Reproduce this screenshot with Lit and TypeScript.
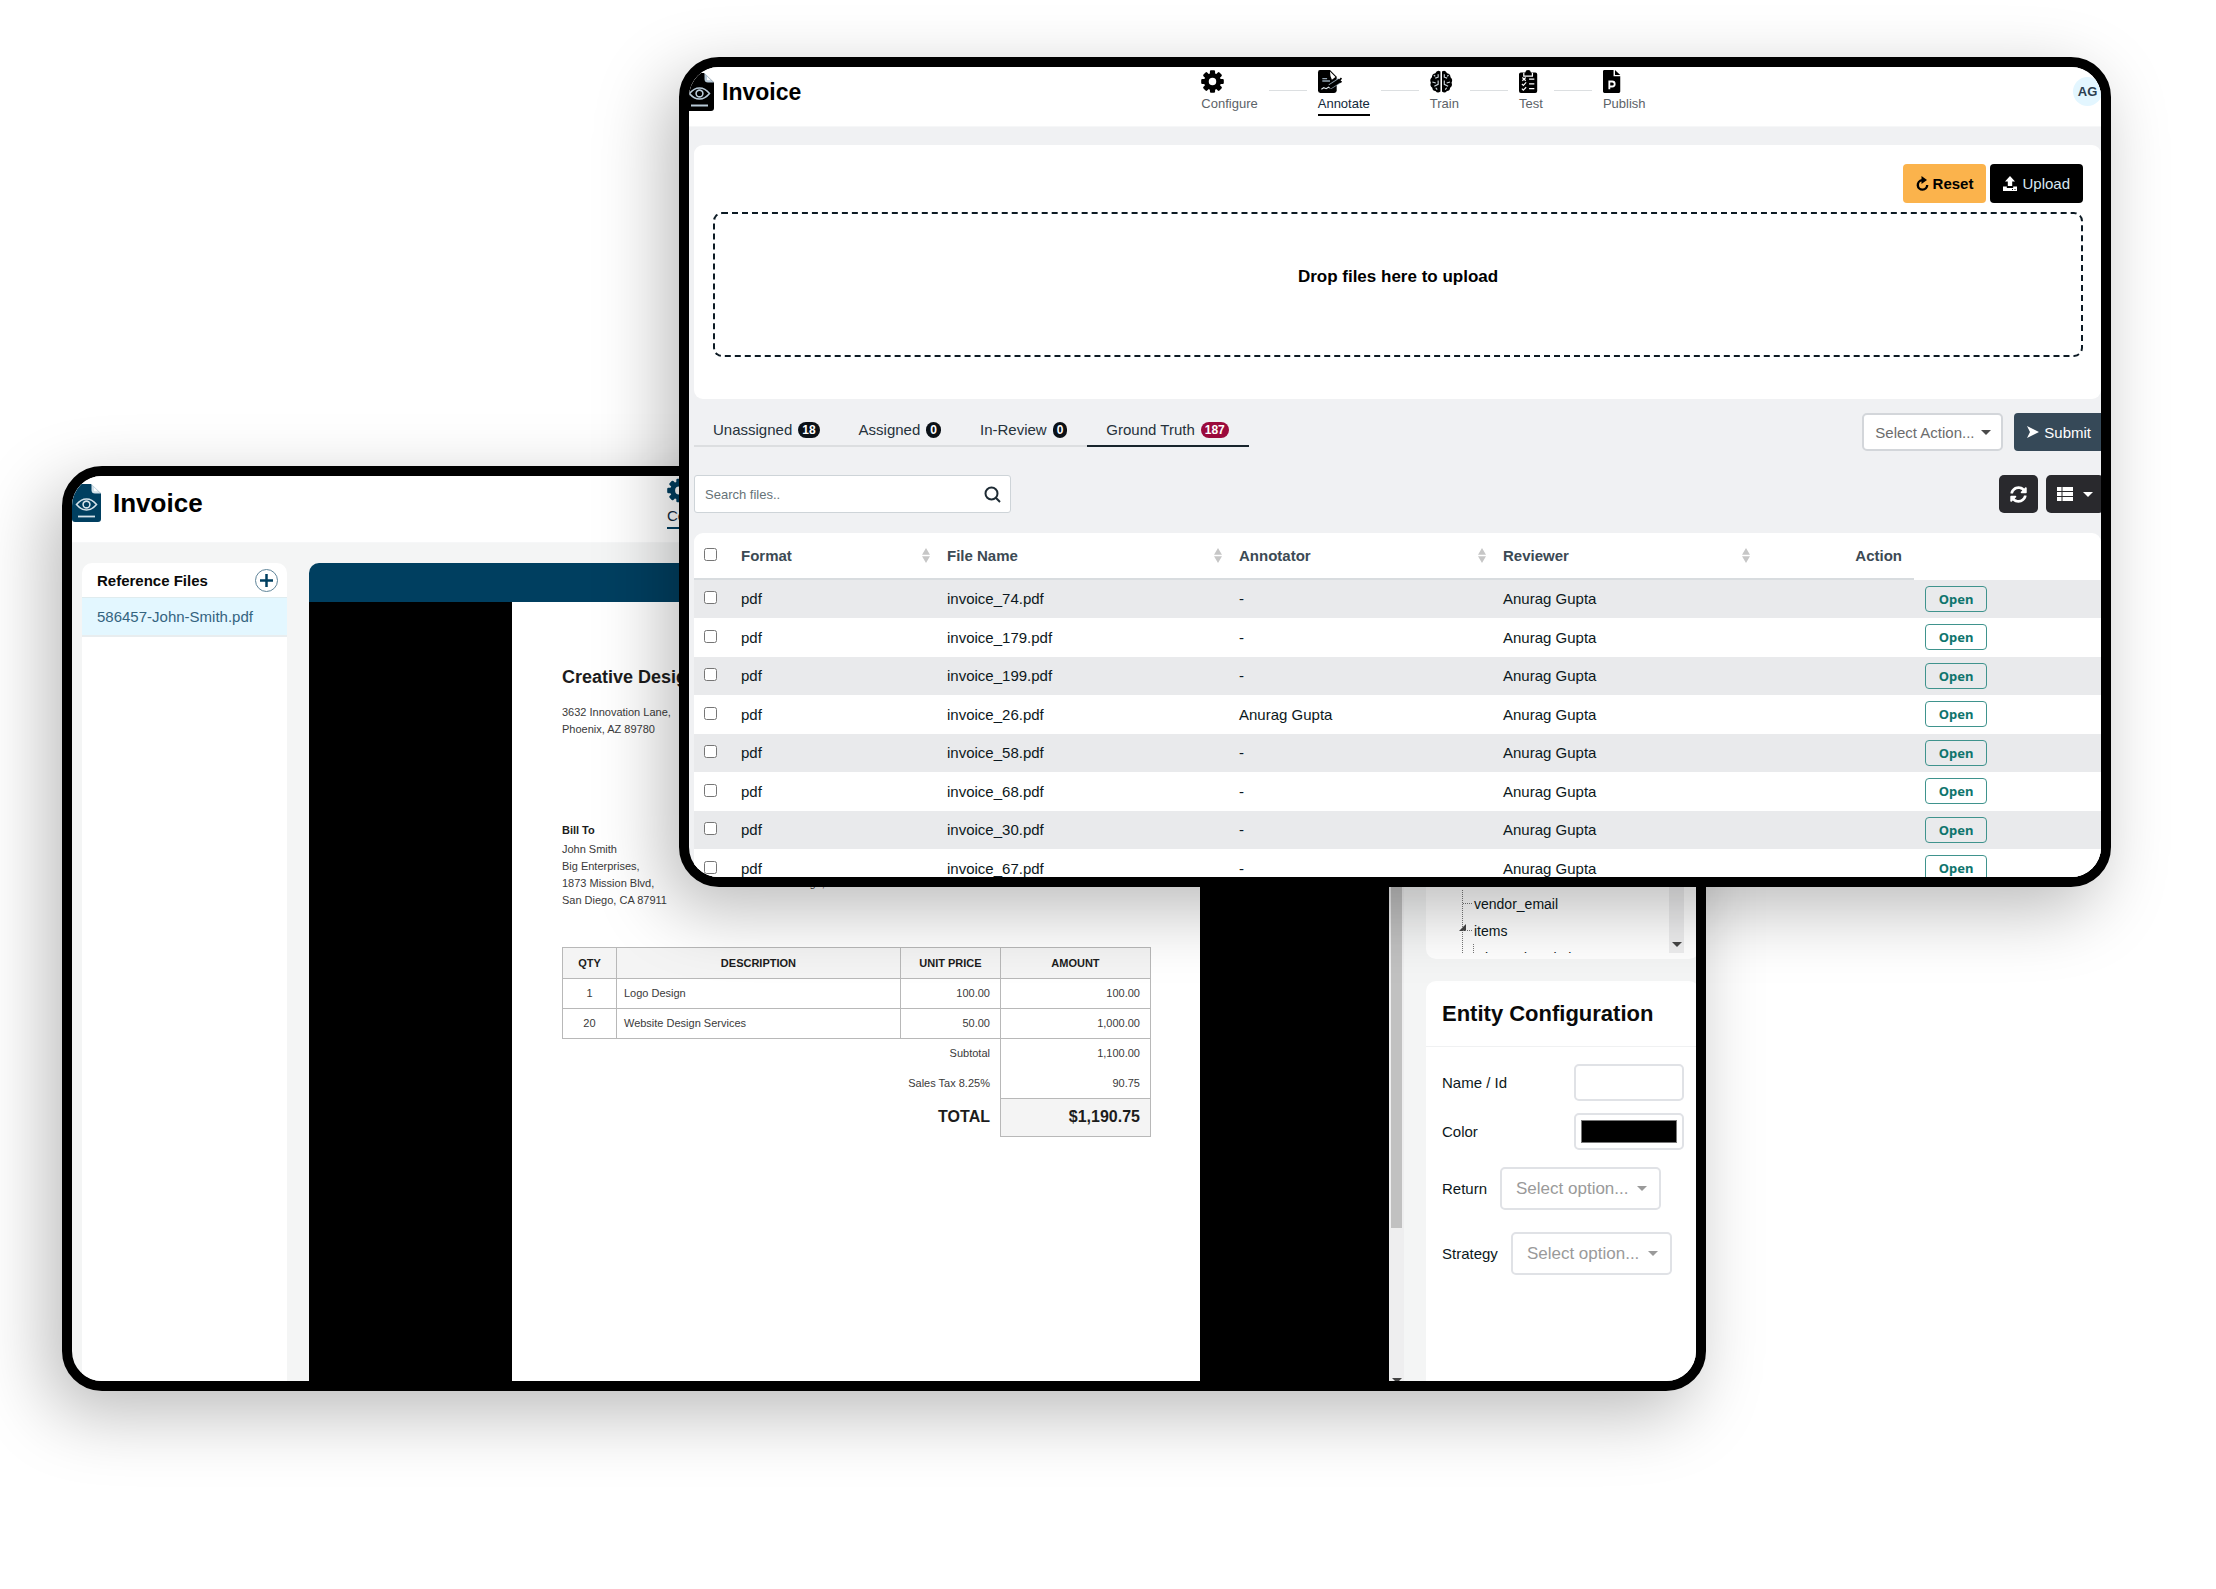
import { LitElement, html, svg, css } from "lit";
import { customElement, property } from "lit/decorators.js";
import { classMap } from "lit/directives/class-map.js";

const controls = css`
  :host {
    font-family: "Liberation Sans", Arial, Helvetica, sans-serif;
    font-size: 15px;
    color: #0c1820;
  }
  * {
    box-sizing: border-box;
  }
  svg {
    display: block;
    flex: none;
  }
  button,
  input,
  select {
    font: inherit;
    margin: 0;
  }
  button {
    cursor: pointer;
  }
  .picker {
    display: inline-grid;
    align-items: center;
  }
  .picker select {
    grid-area: 1 / 1;
    width: 100%;
    height: 100%;
    appearance: none;
    background: #fff;
    border: 2px solid #e0e2e6;
    border-radius: 5px;
    color: inherit;
  }
  .picker svg {
    grid-area: 1 / 1;
    justify-self: end;
    pointer-events: none;
  }
`;

const caret = html`<svg width="10" height="5" viewBox="0 0 10 5" fill="currentColor" aria-hidden="true">
  <path d="M0 0h10L5 5z" />
</svg>`;

const stepIcons: Record<string, unknown> = {
  Configure: svg`
    <circle cx="12" cy="12" r="6.4" fill="none" stroke="currentColor" stroke-width="5" />
    <path d="M9.3 4.5V1.4q0-1.2 1.2-1.2h3q1.2 0 1.2 1.2v3.1zM9.3 19.5v3.1q0 1.2 1.2 1.2h3q1.2 0 1.2-1.2v-3.1z" />
    <path d="M4.5 9.3H1.4q-1.2 0-1.2 1.2v3q0 1.2 1.2 1.2h3.1zM19.5 9.3h3.1q1.2 0 1.2 1.2v3q0 1.2-1.2 1.2h-3.1z" />
    <g transform="rotate(45 12 12)">
      <path d="M9.3 4.5V1.4q0-1.2 1.2-1.2h3q1.2 0 1.2 1.2v3.1zM9.3 19.5v3.1q0 1.2 1.2 1.2h3q1.2 0 1.2-1.2v-3.1z" />
      <path d="M4.5 9.3H1.4q-1.2 0-1.2 1.2v3q0 1.2 1.2 1.2h3.1zM19.5 9.3h3.1q1.2 0 1.2 1.2v3q0 1.2-1.2 1.2h-3.1z" />
    </g>`,
  Annotate: svg`
    <path d="M2 0h10.500l7 7v14.500q0 2.500-2.500 2.500H2.500Q0 24 0 21.500V2.500Q0 0 2 0z" />
    <path d="M12.500 1.500l5.700 5.800-3.700 3q-2-3.500-2-8.800z" fill="#fff" />
    <path d="M4.500 9h5M4.500 11.500h8" stroke="#93a5b3" stroke-width="1.500" />
    <path d="M3.500 20l2.500-1.500 2.500 1 2.500-1.500 2 1 2.500-1.500" fill="none" stroke="#dfe7ec" stroke-width="1.200" />
    <path d="M12.500 17.500L22.500 11" stroke="#8fa2b0" stroke-width="5.600" />
    <path d="M12 17.800L23 10.800" stroke="currentColor" stroke-width="4" />
    <path d="M22.500 10.500l2-2M22.500 11l2 2" stroke="currentColor" stroke-width="1.800" />`,
  Train: svg`
    <path d="M10.900 1.500v21q-3 2.300-5.200-.6-3 0-3.300-3.400Q-.5 16.500.9 13.300-.8 9.800 2 7.600 2 4 5.600 3.500q1.700-4.300 5.300-2z" />
    <path d="M12.500 1.500v21q3 2.300 5.200-.6 3 0 3.300-3.400 2.900-2 1.500-5.200 1.700-3.500-1.100-5.700 0-3.600-3.600-4.100-1.700-4.300-5.300-2z" />
    <path d="M8.500 4.500v3l-3 1M2.500 12.500l3.500 1M8.500 11v4l-4 2M7.500 20.500l-1.500-2M4 5.500l1.500 1M14.900 4.500v3l3 1M20.900 12.500l-3.500 1M14.900 11v4l4 2M15.900 20.500l1.500-2M19.400 5.500l-1.500 1" fill="none" stroke="#cfd8de" stroke-width="1.200" />`,
  Test: svg`
    <path d="M2 2.500h4.500Q7 0 9.500 0T12.500 2.500H17q2 0 2 2V22q0 2-2 2H2q-2 0-2-2V4.500q0-2 2-2z" />
    <path d="M5 2.800v3.700h9V2.800M10.500 9.500H16M10.500 14.500H16M10.500 19.500H16" fill="none" stroke="#fff" stroke-width="1.300" />
    <path d="M3.500 7.800l3.500 3.400M7 7.800l-3.500 3.400M3 14.500l1.500 1.500 3-3M3 19.500L4.500 21l3-3" fill="none" stroke="#fff" stroke-width="1.200" />`,
  Publish: svg`
    <path d="M1.500 0H11v6.500h7V22.500q0 1.500-1.500 1.500h-15Q0 24 0 22.500v-21Q0 0 1.500 0z" />
    <path d="M12.500 0L18 5.200h-5.500z" />
    <path d="M6.600 20v-8h3q2.600 0 2.600 2.600T9.600 17.200h-3" fill="none" stroke="#fff" stroke-width="1.900" />`,
};

const stepNames = ["Configure", "Annotate", "Train", "Test", "Publish"];

@customElement("app-bar")
export class AppBar extends LitElement {
  @property() current = "Configure";
  @property() initials = "";

  static styles = [
    controls,
    css`
      :host {
        display: block;
        --ink: #000;
        --fold: #b8cad8;
      }
      .bar {
        display: grid;
        grid-template-columns: 512fr 871fr 28px;
        min-height: 60px;
        padding-bottom: 10px;
        background: #fff;
        border-bottom: 1px solid #f6f7f8;
      }
      .brand {
        display: flex;
        align-items: center;
        gap: 8px;
        margin-left: -4px;
        color: var(--ink);
      }
      .title {
        margin: 0;
        font-size: 23px;
        line-height: 28px;
        color: #000;
      }
      .steps {
        display: flex;
        align-items: flex-end;
        gap: 11px;
        color: var(--ink);
      }
      .step {
        display: flex;
        flex-direction: column;
        gap: 1px;
        color: inherit;
        text-decoration: none;
        border-bottom: 2px solid transparent;
      }
      .step svg {
        height: 23px;
        overflow: visible;
      }
      .label {
        font-size: 13px;
        line-height: 20px;
        color: #5c6268;
      }
      .active {
        border-color: var(--ink);
      }
      .active .label {
        color: #12293b;
      }
      .link {
        width: 38px;
        height: 1px;
        margin-bottom: 25px;
        background: #dcdfe1;
      }
      .avatar {
        align-self: center;
        width: 29px;
        height: 29px;
        border-radius: 50%;
        background: #e3f6ff;
        color: #2c3e50;
        font-size: 13px;
        font-weight: bold;
        line-height: 29px;
        text-align: center;
      }
      :host([large]) {
        --ink: #003f60;
        --fold: #d4e2ea;
      }
      :host([large]) .bar {
        grid-template-columns: 595fr 1000fr 29px;
        min-height: 67px;
        padding-bottom: 13px;
      }
      :host([large]) .brand {
        gap: 12px;
        margin-left: 0;
      }
      :host([large]) .title {
        font-size: 26px;
      }
      :host([large]) .step svg {
        height: 27px;
      }
      :host([large]) .label {
        font-size: 15px;
        line-height: 22px;
      }
    `,
  ];

  render() {
    return html`
      <header class="bar">
        <div class="brand">
          <svg width="29" height="38" viewBox="0 0 29 38" aria-hidden="true">
            <path d="M3 0h16l10 9.500V35q0 3-3 3H3q-3 0-3-3V3q0-3 3-3z" fill="currentColor" />
            <path d="M19.500 0v6q0 3.500 3.500 3.500h6L19.500 0z" fill="var(--fold)" />
            <path d="M22 3.500v3q0 .8.800.8h3z" fill="#fff" />
            <path d="M4.500 20.500Q9 15 14.500 15t10 5.500Q20 26 14.500 26t-10-5.500z" fill="none" stroke="var(--fold)" stroke-width="1.600" />
            <circle cx="14.500" cy="20.500" r="3.400" fill="none" stroke="var(--fold)" stroke-width="1.600" />
            <path d="M6 32.500h17" stroke="var(--fold)" stroke-width="1.800" />
          </svg>
          <h1 class="title">Invoice</h1>
        </div>
        <nav class="steps" aria-label="Steps">
          ${stepNames.map(
            (name, i) => html`
              ${i ? html`<span class="link"></span>` : ""}
              <a class=${classMap({ step: true, active: name === this.current })} href="#">
                <svg width="24" viewBox="0 0 24 24" preserveAspectRatio="xMinYMid" fill="currentColor" aria-hidden="true">
                  ${stepIcons[name]}
                </svg>
                <span class="label">${name}</span>
              </a>
            `
          )}
        </nav>
        ${this.initials ? html`<span class="avatar">${this.initials}</span>` : ""}
      </header>
    `;
  }
}

interface FileRow {
  name: string;
  annotator: string;
}

const files: FileRow[] = [
  { name: "invoice_74.pdf", annotator: "-" },
  { name: "invoice_179.pdf", annotator: "-" },
  { name: "invoice_199.pdf", annotator: "-" },
  { name: "invoice_26.pdf", annotator: "Anurag Gupta" },
  { name: "invoice_58.pdf", annotator: "-" },
  { name: "invoice_68.pdf", annotator: "-" },
  { name: "invoice_30.pdf", annotator: "-" },
  { name: "invoice_67.pdf", annotator: "-" },
];

const tabs = [
  { label: "Unassigned", count: 18 },
  { label: "Assigned", count: 0 },
  { label: "In-Review", count: 0 },
  { label: "Ground Truth", count: 187, active: true },
];

@customElement("annotate-screen")
export class AnnotateScreen extends LitElement {
  static styles = [
    controls,
    css`
      :host {
        display: block;
      }
      .body {
        padding: 18px 0 0 5px;
      }
      .panel {
        padding: 19px 18px 42px 19px;
        background: #fff;
        border-radius: 9px;
      }
      .buttons {
        display: flex;
        justify-content: flex-end;
        gap: 4px;
      }
      .btn {
        display: flex;
        align-items: center;
        gap: 5px;
        height: 39px;
        padding: 0 13px;
        border: 0;
        border-radius: 4px;
        color: #fff;
        white-space: nowrap;
      }
      .reset {
        gap: 4px;
        background: #fbb34c;
        color: #000;
        font-weight: bold;
      }
      .upload {
        background: #000;
        color: #d8e8f2;
      }
      .drop {
        display: flex;
        align-items: center;
        justify-content: center;
        height: 145px;
        margin-top: 9px;
        padding-bottom: 15px;
        border: 2px dashed #0c1a24;
        border-radius: 9px;
        font-size: 17px;
        font-weight: bold;
        color: #000;
      }
      .row {
        display: flex;
        align-items: flex-end;
        justify-content: space-between;
        margin-right: -3px;
      }
      .filters {
        margin-top: 14px;
      }
      .finder {
        margin-top: 24px;
      }
      .tabs {
        display: flex;
        margin-bottom: 4px;
      }
      .tab {
        display: flex;
        align-items: center;
        gap: 6px;
        padding: 0 20px 6px 19px;
        border: 0;
        border-bottom: 2px solid #dcdee0;
        background: none;
        color: #26323b;
        line-height: 18px;
      }
      .current {
        border-color: #18242c;
      }
      .badge {
        padding: 0 4px;
        border-radius: 8px;
        background: #0b1117;
        color: #fff;
        font-size: 12px;
        font-weight: bold;
        line-height: 16px;
      }
      .current .badge {
        background: #9b0a3c;
      }
      .group {
        display: flex;
        gap: 11px;
      }
      .action {
        width: 141px;
        height: 38px;
        color: #6c6c6c;
      }
      .action select {
        padding: 0 11px;
        border-color: #d3d6da;
      }
      .action svg {
        margin-right: 12px;
        color: #4a4a4a;
      }
      .submit {
        gap: 5px;
        height: 38px;
        background: #364958;
      }
      .icon {
        justify-content: center;
        gap: 10px;
        height: 38px;
        padding: 0 11px;
        border-radius: 5px;
        background: #29292d;
      }
      .tools {
        gap: 8px;
      }
      .search {
        display: flex;
        align-items: center;
        width: 317px;
        height: 38px;
        padding: 0 9px 0 10px;
        background: #fff;
        border: 1px solid #ced4d8;
        border-radius: 3px;
      }
      .search input {
        flex: 1;
        min-width: 0;
        padding: 0;
        border: 0;
        outline: 0;
        font-size: 13px;
      }
      .search input::placeholder {
        color: #667378;
      }
      .sheet {
        margin-top: 20px;
        background: #fff;
        border-radius: 9px 9px 0 0;
        overflow: hidden;
      }
      .files {
        width: 100%;
        table-layout: fixed;
        border-spacing: 0;
      }
      .c-check {
        width: 37px;
      }
      .c-format {
        width: 206px;
      }
      .c-name {
        width: 292px;
      }
      .c-person {
        width: 264px;
      }
      .c-action {
        width: 157px;
      }
      .c-open {
        width: 187px;
      }
      .files th,
      .files td {
        padding: 0 10px 1px;
        text-align: left;
        vertical-align: middle;
      }
      .files th {
        height: 47px;
        color: #3c4a54;
        border-bottom: 2px solid #d8dcdf;
      }
      .files th.bare {
        border: 0;
      }
      .files th.act {
        padding-right: 12px;
        text-align: right;
      }
      .files td {
        height: 38px;
        background: #e9eaec;
      }
      .files tr:nth-child(even) td {
        height: 39px;
        background: #fff;
      }
      .sortable {
        display: flex;
        align-items: center;
        justify-content: space-between;
        margin-right: -3px;
      }
      .check {
        display: block;
        width: 13px;
        height: 13px;
        margin-bottom: 2px;
      }
      .open {
        display: block;
        width: 62px;
        height: 26px;
        margin-left: 1px;
        padding: 0;
        background: none;
        border: 1px solid #3f938d;
        border-radius: 4px;
        color: #0f756d;
        font: bold 13px "Noto Sans", sans-serif;
      }
    `,
  ];

  private head(label: string) {
    return html`<th scope="col">
      <span class="sortable">
        ${label}
        <svg width="8" height="15" viewBox="0 0 8 15" fill="#c6c6c6" aria-hidden="true">
          <path d="M0 6.800L4 0l4 6.800zM0 8.200L4 15l4-6.800z" />
        </svg>
      </span>
    </th>`;
  }

  render() {
    return html`
      <app-bar current="Annotate" initials="AG"></app-bar>
      <main class="body">
        <section class="panel">
          <div class="buttons">
            <button class="btn reset">
              <svg width="13" height="15" viewBox="0 0 13 15" aria-hidden="true">
                <path d="M6 4.300A4.700 4.700 0 1 0 11.200 9" fill="none" stroke="currentColor" stroke-width="2.400" />
                <path d="M5.500 0l5.500 4-5.500 4z" />
              </svg>
              Reset
            </button>
            <button class="btn upload">
              <svg width="14" height="15" viewBox="0 0 14 15" fill="#fff" aria-hidden="true">
                <path d="M7 0l5 5.500H9.200V10H4.800V5.500H2z" />
                <path d="M0 10.500h3.800V12h6.400v-1.500H14V15H0z" />
                <path d="M9 13.500h1M11.500 13.500h1" stroke="#000" />
              </svg>
              Upload
            </button>
          </div>
          <div class="drop">Drop files here to upload</div>
        </section>

        <div class="row filters">
          <div class="tabs" role="tablist">
            ${tabs.map(
              (t) => html`<button role="tab" class=${classMap({ tab: true, current: !!t.active })}>
                ${t.label}<span class="badge">${t.count}</span>
              </button>`
            )}
          </div>
          <div class="group">
            <label class="picker action">
              <select aria-label="Action">
                <option>Select Action...</option>
              </select>
              ${caret}
            </label>
            <button class="btn submit">
              <svg width="12" height="12" viewBox="0 0 12 12" fill="currentColor" aria-hidden="true">
                <path d="M0 0l12 6L0 12l3-6z" />
              </svg>
              Submit
            </button>
          </div>
        </div>

        <div class="row finder">
          <label class="search">
            <input type="text" placeholder="Search files.." aria-label="Search files" />
            <svg width="17" height="17" viewBox="0 0 17 17" fill="none" stroke="#1d2a33" stroke-width="2" aria-hidden="true">
              <circle cx="7.500" cy="7.500" r="6" />
              <path d="M11.800 11.800L16 16" />
            </svg>
          </label>
          <div class="group tools">
            <button class="btn icon" aria-label="Refresh">
              <svg width="17" height="17" viewBox="0 0 512 512" fill="currentColor" aria-hidden="true">
                <path d="M370.720 133.280C339.458 104.008 298.888 87.962 255.848 88c-77.458.068-144.328 53.178-162.791 126.850-1.344 5.363-6.122 9.150-11.651 9.150H24.103c-7.498 0-13.194-6.807-11.807-14.176C33.933 94.924 134.813 8 256 8c66.448 0 126.791 26.136 171.315 68.685L463.030 40.970C478.149 25.851 504 36.559 504 57.941V192c0 13.255-10.745 24-24 24H345.941c-21.382 0-32.090-25.851-16.971-40.971l41.750-41.749zM32 296h134.059c21.382 0 32.090 25.851 16.971 40.971l-41.750 41.750c31.262 29.273 71.835 45.319 114.876 45.280 77.418-.070 144.315-53.144 162.787-126.849 1.344-5.363 6.122-9.150 11.651-9.150h57.304c7.498 0 13.194 6.807 11.807 14.176C478.067 417.076 377.187 504 256 504c-66.448 0-126.791-26.136-171.315-68.685L48.970 471.030C33.851 486.149 8 475.441 8 454.059V320c0-13.255 10.745-24 24-24z" />
              </svg>
            </button>
            <button class="btn icon" aria-label="View">
              <svg width="16" height="14" viewBox="0 0 16 14" fill="currentColor" aria-hidden="true">
                <path d="M0 0h4.500v4H0zM5.500 0H16v4H5.500zM0 5h4.500v4H0zM5.500 5H16v4H5.500zM0 10h4.500v4H0zM5.500 10H16v4H5.500z" />
              </svg>
              ${caret}
            </button>
          </div>
        </div>

        <div class="sheet">
          <table class="files">
            <colgroup>
              <col class="c-check" />
              <col class="c-format" />
              <col class="c-name" />
              <col class="c-person" />
              <col class="c-person" />
              <col class="c-action" />
              <col class="c-open" />
            </colgroup>
            <thead>
              <tr>
                <th><input class="check" type="checkbox" aria-label="Select all" /></th>
                ${["Format", "File Name", "Annotator", "Reviewer"].map((h) => this.head(h))}
                <th class="act" scope="col">Action</th>
                <th class="bare"></th>
              </tr>
            </thead>
            <tbody>
              ${files.map(
                (f) => html`<tr>
                  <td><input class="check" type="checkbox" aria-label=${f.name} /></td>
                  <td>pdf</td>
                  <td>${f.name}</td>
                  <td>${f.annotator}</td>
                  <td>Anurag Gupta</td>
                  <td></td>
                  <td><button class="open">Open</button></td>
                </tr>`
              )}
            </tbody>
          </table>
        </div>
      </main>
    `;
  }
}

@customElement("invoice-sheet")
export class InvoiceSheet extends LitElement {
  static styles = css`
    :host {
      display: block;
      padding: 67px 49px 0 50px;
      background: #fff;
      color: #3a3a3a;
      font: 11px / 17px "Liberation Sans", Arial, sans-serif;
    }
    * {
      box-sizing: border-box;
    }
    .company {
      margin: 0;
      color: #1c1c1c;
      font-size: 18px;
      line-height: 17px;
      white-space: nowrap;
    }
    .lines {
      margin: 0;
      white-space: pre-line;
    }
    .from {
      margin-top: 18px;
    }
    .parties {
      display: grid;
      grid-template-columns: 208fr 380fr;
      margin-top: 84px;
    }
    .party {
      margin: 0;
      padding-bottom: 2px;
      color: #1c1c1c;
      font-size: 11px;
    }
    .bill {
      width: 100%;
      margin-top: 38px;
      table-layout: fixed;
      border-collapse: collapse;
    }
    .bill th,
    .bill td {
      height: 30px;
      padding: 0 10px;
      text-align: right;
    }
    .bill th {
      height: 31px;
      background: #f4f4f4;
      color: #1c1c1c;
      text-align: center;
    }
    .bill .box {
      border: 1px solid #b8b8b8;
    }
    .bill .sides {
      border: solid #b8b8b8;
      border-width: 0 1px;
    }
    .bill .mid {
      text-align: center;
    }
    .bill .text {
      padding-left: 7px;
      text-align: left;
    }
    .bill .total {
      height: 38px;
      padding-bottom: 2px;
      color: #1c1c1c;
      font-size: 16px;
      font-weight: bold;
    }
    .bill .sum {
      background: #f4f4f4;
    }
    .qty {
      width: 54px;
    }
    .desc {
      width: 284px;
    }
    .unit {
      width: 100px;
    }
    .amount {
      width: 150px;
    }
  `;

  render() {
    return html`
      <h2 class="company">Creative Design</h2>
      <p class="lines from">3632 Innovation Lane,<br />Phoenix, AZ 89780</p>
      <div class="parties">
        <div>
          <h3 class="party">Bill To</h3>
          <p class="lines">John Smith<br />Big Enterprises,<br />1873 Mission Blvd,<br />San Diego, CA 87911</p>
        </div>
        <div>
          <h3 class="party">Ship To</h3>
          <p class="lines">John Smith<br />1873 Mission Blvd,<br />San Diego, CA 87911</p>
        </div>
      </div>
      <table class="bill">
        <colgroup>
          <col class="qty" />
          <col class="desc" />
          <col class="unit" />
          <col class="amount" />
        </colgroup>
        <thead>
          <tr>
            <th class="box">QTY</th>
            <th class="box">DESCRIPTION</th>
            <th class="box">UNIT PRICE</th>
            <th class="box">AMOUNT</th>
          </tr>
        </thead>
        <tbody>
          <tr>
            <td class="box mid">1</td>
            <td class="box text">Logo Design</td>
            <td class="box">100.00</td>
            <td class="box">100.00</td>
          </tr>
          <tr>
            <td class="box mid">20</td>
            <td class="box text">Website Design Services</td>
            <td class="box">50.00</td>
            <td class="box">1,000.00</td>
          </tr>
          <tr>
            <td colspan="3">Subtotal</td>
            <td class="sides">1,100.00</td>
          </tr>
          <tr>
            <td colspan="3">Sales Tax 8.25%</td>
            <td class="sides">90.75</td>
          </tr>
          <tr>
            <td class="total" colspan="3">TOTAL</td>
            <td class="box total sum">$1,190.75</td>
          </tr>
        </tbody>
      </table>
    `;
  }
}

@customElement("configure-screen")
export class ConfigureScreen extends LitElement {
  static styles = [
    controls,
    css`
      :host {
        display: flex;
        flex-direction: column;
      }
      .body {
        flex: 1;
        min-height: 0;
        display: grid;
        grid-template-columns: 205px minmax(0, 1fr) 273px;
        gap: 22px;
        margin-right: -3px;
        padding: 20px 0 0 10px;
      }
      .card {
        background: #fff;
        border-radius: 10px 10px 0 0;
        overflow: hidden;
      }
      .heading {
        display: flex;
        align-items: center;
        justify-content: space-between;
        height: 35px;
        padding: 0 9px 0 15px;
        border-bottom: 1px solid #dfecef;
      }
      .heading h2 {
        margin: 0;
        font-size: 15px;
        color: #0a0a0a;
      }
      .add {
        display: grid;
        place-items: center;
        width: 23px;
        height: 23px;
        padding: 0;
        border: 1px solid #5f8499;
        border-radius: 50%;
        background: none;
        color: #003f60;
      }
      .file {
        display: block;
        padding: 0 15px;
        border-bottom: 2px solid #e8edef;
        background: #e3f7ff;
        color: #34647f;
        line-height: 37px;
        text-decoration: none;
      }
      .viewer {
        display: grid;
        grid-template: 39px 1fr / minmax(0, 1fr) 15px;
      }
      .ribbon {
        background: #003f60;
        border-top-left-radius: 10px;
      }
      .canvas {
        display: grid;
        grid-template-columns: 204fr 686fr 190fr;
        background: #000;
      }
      .paper {
        grid-column: 2;
      }
      .track {
        grid-area: 1 / 2 / 3 / 3;
        display: flex;
        flex-direction: column;
        align-items: center;
        justify-content: space-between;
        background: #eeeeef;
        color: #444;
        overflow: hidden;
      }
      .thumb {
        width: 11px;
        height: 665px;
        background: #c1c1c1;
      }
      .track svg {
        margin-bottom: -2px;
      }
      .side {
        display: flex;
        flex-direction: column;
        gap: 22px;
      }
      .tree {
        display: grid;
        grid-template-columns: minmax(0, 1fr) 15px;
        height: 396px;
        padding: 0 15px 6px 30px;
        border-radius: 10px;
      }
      .nodes {
        display: flex;
        flex-direction: column;
        justify-content: flex-end;
        height: 390px;
        overflow: hidden;
        font-size: 14px;
      }
      .list {
        margin: 0 0 -18px 6px;
        padding: 0;
        list-style: none;
        border-left: 1px dotted #777;
      }
      .node {
        display: flex;
        align-items: center;
        gap: 2px;
        height: 27px;
      }
      .node::before {
        content: "";
        width: 9px;
        border-top: 1px dotted #777;
      }
      .parent svg {
        margin: 0 -5px 7px -4px;
      }
      .parent::before {
        order: 1;
      }
      .parent span {
        order: 2;
      }
      .child {
        margin-left: 10px;
        border-left: 1px dotted #777;
      }
      .bar {
        display: flex;
        align-items: flex-end;
        justify-content: center;
        padding-bottom: 6px;
        background: #eeeeef;
        color: #444;
      }
      .config {
        flex: 1;
      }
      .config h2 {
        margin: 0;
        padding: 0 16px;
        border-bottom: 1px solid #f0f1f2;
        color: #0a0a0a;
        font-size: 22px;
        line-height: 65px;
      }
      .form {
        display: flex;
        flex-direction: column;
        gap: 12px;
        padding: 17px 15px 0 16px;
      }
      .field {
        display: flex;
        align-items: center;
        justify-content: space-between;
      }
      .field input {
        width: 110px;
        height: 37px;
        padding: 5px;
        background: #fff;
        border: 2px solid #e0e2e6;
        border-radius: 5px;
      }
      .field input[type="color"]::-webkit-color-swatch-wrapper {
        padding: 0;
      }
      .field input[type="color"]::-webkit-color-swatch {
        border: 1px solid #777;
        border-radius: 0;
      }
      .choice {
        justify-content: flex-start;
        gap: 13px;
        margin-top: 5px;
        margin-bottom: 5px;
      }
      .choice .picker {
        width: 161px;
        height: 43px;
        color: #9a9a9a;
        font-size: 17px;
      }
      .choice select {
        padding: 0 14px;
      }
      .choice svg {
        margin-right: 14px;
      }
    `,
  ];

  private choice(label: string) {
    const id = label.toLowerCase();
    return html`<div class="field choice">
      <label for=${id}>${label}</label>
      <span class="picker">
        <select id=${id}>
          <option>Select option...</option>
        </select>
        ${caret}
      </span>
    </div>`;
  }

  render() {
    return html`
      <app-bar large current="Configure"></app-bar>
      <main class="body">
        <section class="card">
          <div class="heading">
            <h2>Reference Files</h2>
            <button class="add" aria-label="Add file">
              <svg width="13" height="13" viewBox="0 0 13 13" stroke="currentColor" stroke-width="2.500" aria-hidden="true">
                <path d="M6.500 0v13M0 6.500h13" />
              </svg>
            </button>
          </div>
          <a class="file" href="#">586457-John-Smith.pdf</a>
        </section>

        <section class="viewer">
          <div class="ribbon"></div>
          <div class="canvas"><invoice-sheet class="paper"></invoice-sheet></div>
          <div class="track"><span class="thumb"></span>${caret}</div>
        </section>

        <aside class="side">
          <section class="card tree">
            <div class="nodes">
              <ul class="list">
                <li class="node"><span>vendor_email</span></li>
                <li class="node parent">
                  <svg width="7" height="7" viewBox="0 0 7 7" fill="#444" aria-hidden="true"><path d="M7 0v7H0z" /></svg>
                  <span>items</span>
                </li>
                <li class="node child"><span>item_description</span></li>
              </ul>
            </div>
            <div class="bar">${caret}</div>
          </section>
          <section class="card config">
            <h2>Entity Configuration</h2>
            <div class="form">
              <div class="field">
                <label for="name">Name / Id</label>
                <input id="name" type="text" />
              </div>
              <div class="field">
                <label for="color">Color</label>
                <input id="color" type="color" value="#000000" />
              </div>
              ${this.choice("Return")} ${this.choice("Strategy")}
            </div>
          </section>
        </aside>
      </main>
    `;
  }
}

@customElement("app-root")
export class AppRoot extends LitElement {
  static styles = css`
    :host {
      display: block;
    }
    .stage {
      position: relative;
      min-height: 100vh;
      overflow: hidden;
      background: #fff;
    }
    .window {
      position: absolute;
      overflow: hidden;
      border: 10px solid #000;
      border-radius: 40px;
      box-shadow: -14px 22px 70px rgba(0, 0, 0, 0.27);
    }
    .back {
      inset: 466px 510px 198px 62px;
      background: #f4f5f5;
    }
    .front {
      inset: 57px 105px 702px 679px;
      background: #f0f1f3;
    }
    .fill {
      height: 100%;
    }
  `;

  render() {
    return html`
      <div class="stage">
        <div class="window back"><configure-screen class="fill"></configure-screen></div>
        <div class="window front"><annotate-screen></annotate-screen></div>
      </div>
    `;
  }
}
